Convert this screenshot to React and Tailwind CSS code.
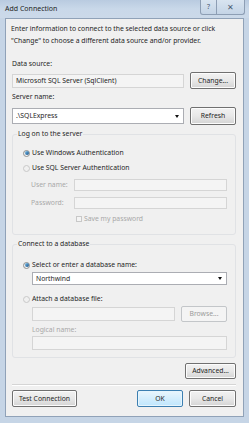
import React from 'react';

const font = { fontFamily: '"Noto Sans", "Open Sans", sans-serif' };

const Btn = ({ children, className = '', primary = false, disabled = false }) => (
  <div
    className={`flex items-center justify-center rounded-[2px] border text-[6.8px] ${
      primary
        ? 'border-[#3c7fb1] bg-gradient-to-b from-[#eaf6fd] to-[#bee6fd] text-[#1e1e1e] shadow-[inset_0_0_0_1px_#e6f5fd]'
        : disabled
        ? 'border-[#c3c6c9] bg-[#f4f4f4] text-[#9a9a9a]'
        : 'border-[#707070] bg-gradient-to-b from-[#f2f2f2] via-[#e8e8e8] to-[#d4d4d4] text-[#1e1e1e] shadow-[inset_0_0_0_1px_#fcfcfc]'
    } ${className}`}
  >
    {children}
  </div>
);

const Field = ({ children, className = '', disabled = false, combo = false }) => (
  <div
    className={`flex items-center border pl-[3px] pr-[4px] text-[6.8px] ${
      disabled ? 'border-[#d5d5d5] bg-[#f4f4f4]' : 'border-[#abadb3] bg-white'
    } ${className}`}
  >
    <span className="flex-1 truncate">{children}</span>
    {combo && <span className="h-0 w-0 border-x-[2px] border-t-[3px] border-x-transparent border-t-[#111]" />}
  </div>
);

const Radio = ({ checked, disabled, label }) => (
  <div className="flex items-center gap-[2px]">
    <span
      className={`flex h-[7px] w-[7px] items-center justify-center rounded-full border ${
        disabled ? 'border-[#c8c8c8] bg-[#f0f0f0]' : 'border-[#8e8f8f] bg-gradient-to-br from-[#e5e5e5] to-[#fafafa]'
      }`}
    >
      {checked && <span className="h-[4px] w-[4px] rounded-full bg-gradient-to-br from-[#7cc4f0] to-[#144e84]" />}
    </span>
    <span>{label}</span>
  </div>
);

export default function App() {
  return (
    <div style={font} className="h-[423px] w-[249px] overflow-hidden bg-[#c6d5e6] text-[#1e1e1e]">
      <div className="flex h-[18px] items-start bg-gradient-to-b from-[#b9cbe0] via-[#c9d8e9] to-[#cbd9e9] pl-[5px] pr-[4px]">
        <span className="mt-[4px] text-[7px] leading-[10px] text-[#1e1e1e]">Add Connection</span>
        <div className="ml-auto flex h-[15px]">
          <div className="flex w-[17px] items-center justify-center rounded-bl-[3px] border border-t-0 border-[#8d9eb4] bg-gradient-to-b from-[#d8e4f0] to-[#c4d4e6] text-[7px] text-[#4a5a70]">
            ?
          </div>
          <div className="flex w-[28px] items-center justify-center rounded-br-[3px] border border-l-0 border-t-0 border-[#8d9eb4] bg-gradient-to-b from-[#d8e4f0] to-[#c4d4e6] text-[8px] text-[#4a5a70]">
            ✕
          </div>
        </div>
      </div>
      <div className="mx-[5px] h-[399px] border border-[#90a2b8] bg-[#f0f0f0] pl-[6px] pr-[7px] text-[6.8px] leading-[12px]">
        <div className="-ml-[1px] mt-[4px]">
          Enter information to connect to the selected data source or click
          <br />
          "Change" to choose a different data source and/or provider.
        </div>
        <div className="mt-[11px]">Data source:</div>
        <div className="mt-[2px] flex items-center gap-[6px]">
          <Field disabled className="h-[14px] flex-1">Microsoft SQL Server (SqlClient)</Field>
          <Btn className="h-[17px] w-[46px]">Change...</Btn>
        </div>
        <div className="mt-[2px]">Server name:</div>
        <div className="mt-[4px] flex items-center gap-[6px]">
          <Field combo className="h-[16px] flex-1">.\SQLExpress</Field>
          <Btn className="h-[18px] w-[46px]">Refresh</Btn>
        </div>
        <fieldset className="mt-[3px] rounded-[3px] border border-[#e0e2e5] pb-[9px] pl-[10px] pr-[8px]">
          <legend className="-ml-[6px] px-[1px]">Log on to the server</legend>
          <div className="mt-[7px] flex flex-col gap-[3px]">
            <Radio checked label="Use Windows Authentication" />
            <Radio disabled label="Use SQL Server Authentication" />
          </div>
          <div className="ml-[8px] mt-[5px] flex flex-col gap-[6px] text-[#a8a8a8]">
            <div className="flex items-center">
              <span className="w-[43px]">User name:</span>
              <Field disabled className="h-[12px] flex-1" />
            </div>
            <div className="flex items-center">
              <span className="w-[43px]">Password:</span>
              <Field disabled className="h-[12px] flex-1" />
            </div>
          </div>
          <div className="ml-[53px] mt-[4px] flex items-center gap-[2px] text-[#a8a8a8]">
            <span className="h-[6px] w-[6px] border border-[#c8c8c8] bg-[#f4f4f4]" />
            Save my password
          </div>
        </fieldset>
        <fieldset className="mt-[3px] rounded-[3px] border border-[#e0e2e5] pb-[7px] pl-[10px] pr-[8px]">
          <legend className="-ml-[6px] px-[1px]">Connect to a database</legend>
          <div className="mt-[9px]">
            <Radio checked label="Select or enter a database name:" />
          </div>
          <Field combo className="ml-[9px] mt-[1px] h-[13px]">Northwind</Field>
          <div className="mt-[8px]">
            <Radio disabled label="Attach a database file:" />
          </div>
          <div className="ml-[9px] mt-[1px] flex items-center gap-[6px]">
            <Field disabled className="h-[14px] flex-1" />
            <Btn disabled className="h-[16px] w-[46px]">Browse...</Btn>
          </div>
          <div className="ml-[9px] mt-[2px] text-[#a8a8a8]">Logical name:</div>
          <Field disabled className="ml-[9px] h-[14px]" />
        </fieldset>
        <div className="mt-[5px] flex justify-end">
          <Btn className="h-[16px] w-[51px]">Advanced...</Btn>
        </div>
        <div className="mt-[5px] h-px bg-[#d5d5d5] shadow-[0_1px_0_#fff]" />
        <div className="mt-[5px] flex items-center">
          <Btn className="h-[17px] w-[65px]">Test Connection</Btn>
          <Btn primary className="ml-auto h-[17px] w-[46px]">OK</Btn>
          <Btn className="ml-[6px] h-[17px] w-[47px]">Cancel</Btn>
        </div>
      </div>
    </div>
  );
}
